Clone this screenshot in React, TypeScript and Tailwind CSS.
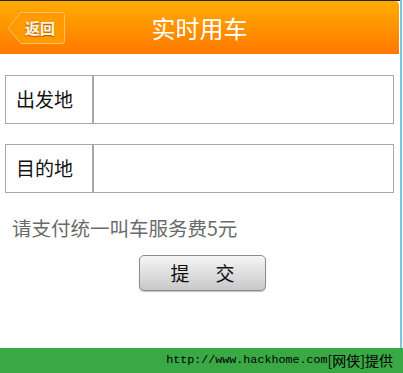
const font = "font-['Noto_Sans_CJK_SC','Noto_Sans',sans-serif]";

const Field = ({label}: {label: string}) => (
    <div className="flex h-[49px] border border-[#a8a8a8] bg-white">
        <div className="w-[88px] flex items-center pl-[10px] text-[19px] text-[#111] border-r-2 border-[#a8a8a8]">{label}</div>
        <div className="flex-1"></div>
    </div>
)

const App = () => {
    return (
        <div className={`w-[403px] h-[373px] bg-white flex flex-col overflow-hidden ${font}`}>
            <div className="flex flex-1">
                <div className="w-[400px] flex flex-col">
                    <div className="h-[1px] bg-[#222]"></div>
                    <div className="relative h-[53px] w-[399px] rounded-tr-[4px] bg-gradient-to-b from-[#ffab00] to-[#ff7800] flex items-center justify-center">
                        <div className="absolute left-[7px] top-[11px] w-[58px] h-[32px]">
                            <svg width="58" height="32" viewBox="0 0 58 32" className="absolute inset-0">
                                <path d="M14 0.5 H55 Q57.5 0.5 57.5 3 V29 Q57.5 31.5 55 31.5 H14 L0.8 16 Z" fill="#ff9a00" stroke="#ffc060" strokeWidth="1"/>
                            </svg>
                            <span className="absolute left-[18px] top-[5px] text-[15px] leading-[22px] text-[#fff6ea] font-bold [text-shadow:0_1px_1px_rgba(120,60,0,0.7)]">返回</span>
                        </div>
                        <span className="text-[24px] text-white leading-none">实时用车</span>
                    </div>
                    <div className="px-[5px] pt-[21px] flex flex-col gap-[20px] w-[399px]">
                        <Field label="出发地"/>
                        <Field label="目的地"/>
                    </div>
                    <div className="pl-[12px] pt-[22px] text-[19.5px] text-[#6a6a6a] leading-[26px]">请支付统一叫车服务费5元</div>
                    <div className="flex pl-[139px] pt-[14px]">
                        <button className="w-[127px] h-[36px] rounded-[5px] border border-[#8a8a8a] bg-gradient-to-b from-[#f6f6f6] to-[#c8c8c8] text-[19px] text-[#111] flex items-center justify-center gap-[26px] shadow-[0_1px_1px_rgba(0,0,0,0.25)]">
                            <span>提</span><span>交</span>
                        </button>
                    </div>
                </div>
                <div className="w-[2px] bg-[#7cc6e4]"></div>
            </div>
            <div className="h-[25px] bg-[#3aa845] flex items-center justify-end pr-[10px] text-black">
                <span className="text-[11.7px] font-['Liberation_Mono',monospace]">http://www.hackhome.com</span>
                <span className="text-[14px] font-['Noto_Sans_CJK_SC',sans-serif]">[网侠]提供</span>
            </div>
        </div>
    );
};

export default App;
